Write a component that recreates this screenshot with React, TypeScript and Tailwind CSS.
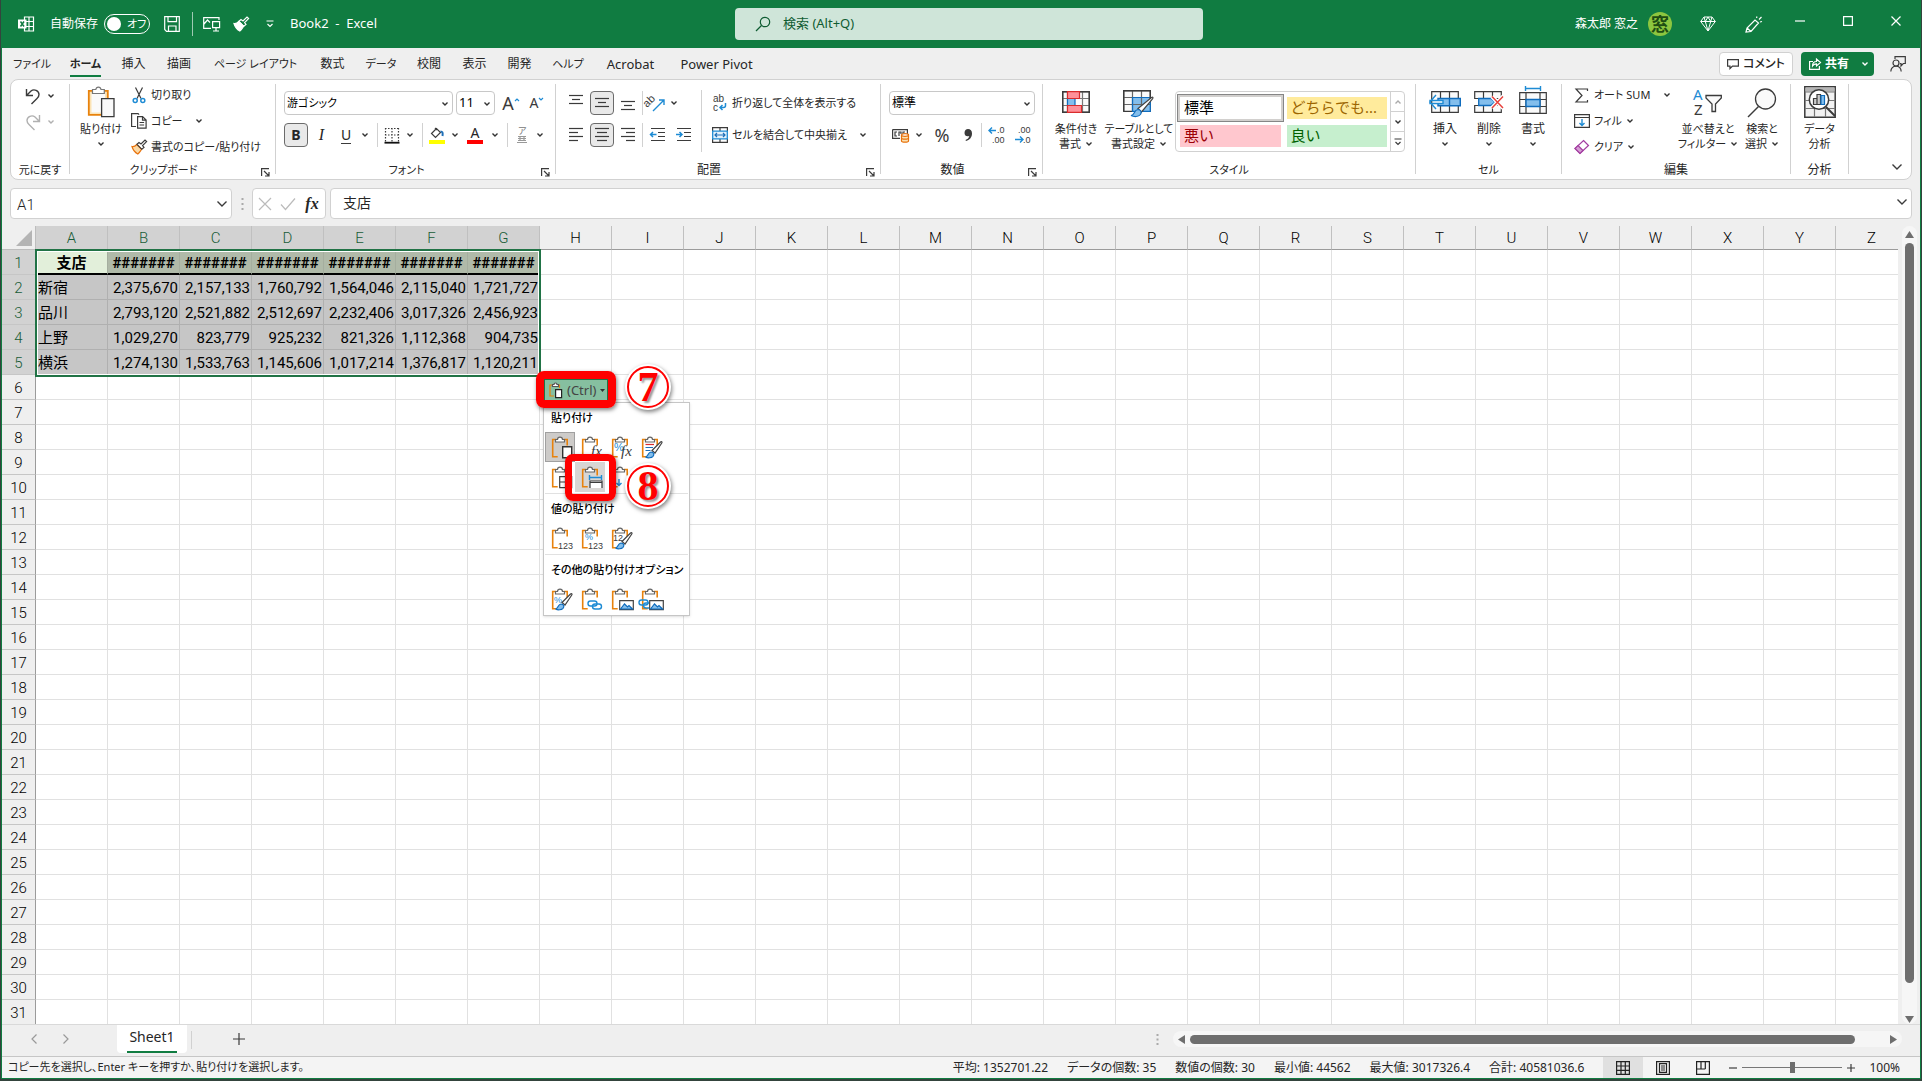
import type { ReactNode } from 'react';
import clsx from 'clsx';

const COLUMNS = 'ABCDEFGHIJKLMNOPQRSTUVWXYZ'.split('');
const ROW_COUNT = 31;
const SELECTED_COLS = 7;
const SELECTED_ROWS = 5;

const HASHES = '#######';

const DATA: string[][] = [
  ['支店', HASHES, HASHES, HASHES, HASHES, HASHES, HASHES],
  ['新宿', '2,375,670', '2,157,133', '1,760,792', '1,564,046', '2,115,040', '1,721,727'],
  ['品川', '2,793,120', '2,521,882', '2,512,697', '2,232,406', '3,017,326', '2,456,923'],
  ['上野', '1,029,270', '823,779', '925,232', '821,326', '1,112,368', '904,735'],
  ['横浜', '1,274,130', '1,533,763', '1,145,606', '1,017,214', '1,376,817', '1,120,211'],
];

const TABS = [
  { label: 'ファイル', width: 'w-14' },
  { label: 'ホーム', width: 'w-[51px]', active: true },
  { label: '挿入', width: 'w-[45px]' },
  { label: '描画', width: 'w-[46px]' },
  { label: 'ページ レイアウト', width: 'w-[107px]' },
  { label: '数式', width: 'w-[47px]' },
  { label: 'データ', width: 'w-[50px]' },
  { label: '校閲', width: 'w-[46px]' },
  { label: '表示', width: 'w-[45px]' },
  { label: '開発', width: 'w-[45px]' },
  { label: 'ヘルプ', width: 'w-[52px]' },
  { label: 'Acrobat', width: 'w-[73px]' },
  { label: 'Power Pivot', width: 'w-[99px]' },
];

const STATS = [
  '平均: 1352701.22',
  'データの個数: 35',
  '数値の個数: 30',
  '最小値: 44562',
  '最大値: 3017326.4',
  '合計: 40581036.6',
];

/* ---------- shared bits ---------- */

const labelSize = (text: string) => {
  if (/[\u3040-\u30ff]/.test(text)) return 'text-[11px]';
  return /^[\x20-\x7e]+$/.test(text) ? 'text-[13px]' : 'text-xs';
};

interface IconProps {
  w: number;
  h: number;
  children: ReactNode;
  className?: string;
  stroke?: string;
}

const Icon = ({ w, h, children, className, stroke = '#3b3b3b' }: IconProps) => (
  <svg
    width={w}
    height={h}
    viewBox={`0 0 ${w} ${h}`}
    fill="none"
    stroke={stroke}
    strokeWidth="1.2"
    className={clsx('shrink-0 overflow-visible', className)}
    aria-hidden="true"
  >
    {children}
  </svg>
);

const Chevron = ({ color = '#333', className }: { color?: string; className?: string }) => (
  <Icon w={8} h={6} stroke={color} className={className}>
    <path d="M1.5 1.5 4 4l2.5-2.5" strokeWidth="1.4" />
  </Icon>
);

const WideChevron = ({ className }: { className?: string }) => (
  <Icon w={12} h={8} className={className}>
    <path d="M1.5 1.5 6 6l4.5-4.5" strokeWidth="1.4" />
  </Icon>
);

const DropButton = ({ label, className = 'w-4', color }: { label: string; className?: string; color?: string }) => (
  <button type="button" aria-label={label} className={clsx('flex h-6 items-center justify-center', className)}>
    <Chevron color={color} />
  </button>
);

interface ToolProps {
  label: string;
  children: ReactNode;
  className?: string;
  active?: boolean;
}

const Tool = ({ label, children, className = 'w-6', active }: ToolProps) => (
  <button
    type="button"
    aria-label={label}
    aria-pressed={active}
    className={clsx(
      'flex h-6 shrink-0 items-center justify-center',
      active && 'rounded-sm border border-[#6b6b6b] bg-[#e9e9e9]',
      className,
    )}
  >
    {children}
  </button>
);

const Sep = ({ className = 'mx-1 h-6' }: { className?: string }) => (
  <div className={clsx('w-px shrink-0 bg-[#d1d1d1]', className)} />
);

interface GroupProps {
  label: string;
  width: string;
  children: ReactNode;
  launcher?: boolean;
}

const Group = ({ label, width, children, launcher }: GroupProps) => (
  <section aria-label={label} className={clsx('flex shrink-0', width)}>
    <div className="flex min-w-0 flex-1 flex-col">
      <div className="flex h-[78px] items-start">{children}</div>
      <div className={clsx('flex h-4 items-center', labelSize(label))}>
        <span className="flex-1 text-center leading-4">{label}</span>
        {launcher && (
          <button type="button" aria-label={`${label}の設定`} className="mr-0.5 w-4 pl-1 pt-1">
            <Icon w={9} h={9}>
              <path d="M.6 8V.6H8M3 3l5 5M8 4v4H4" />
            </Icon>
          </button>
        )}
      </div>
    </div>
    <Sep className="h-[90px]" />
  </section>
);

interface BigButtonProps {
  icon: ReactNode;
  lines: string[];
  width: string;
  drop?: boolean;
}

// Tall ribbon button; the arrow goes after the second line, or on its own when there is only one.
const BigButton = ({ icon, lines, width, drop = true }: BigButtonProps) => (
  <button type="button" className={clsx('flex shrink-0 flex-col items-center whitespace-nowrap leading-[15px]', width)}>
    <span className="mb-px flex h-9 items-center justify-center">{icon}</span>
    <span className={clsx('leading-[15px]', labelSize(lines[0]))}>{lines[0]}</span>
    <span className="flex h-[15px] items-center gap-1">
      {lines[1]}
      {drop && <Chevron />}
    </span>
  </button>
);

const SmallButton = ({ icon, children }: { icon: ReactNode; children: ReactNode }) => (
  <button type="button" className="flex h-[22px] items-center gap-1 whitespace-nowrap text-[11px]">
    <span className="flex w-4 justify-center">{icon}</span>
    <span>{children}</span>
  </button>
);

/* ---------- ribbon icons ---------- */

const PasteIcon = () => (
  <Icon w={28} h={32}>
    <path d="M1.8 4.8h19v24h-19z" fill="#fbe3b5" stroke="#e8820c" strokeWidth="1.8" />
    <path d="M4.5 7.5h13.5v19H4.5z" fill="#fafafa" stroke="none" />
    <path d="M5.5 7.5v-4h3.3C9.3.2 13.5.2 14 3.5h3.3v4z" fill="#fff" stroke="#777" />
    <path d="M14.6 12.6H27v18H14.6z" fill="#fafafa" strokeWidth="1.3" />
  </Icon>
);

const ScissorsIcon = () => (
  <Icon w={14} h={17}>
    <path d="M3.5.5 9 11.5M10.500.5 5 11.500" />
    <circle cx="3.2" cy="13.5" r="2" stroke="#1e8bd4" strokeWidth="1.5" />
    <circle cx="10.8" cy="13.5" r="2" stroke="#1e8bd4" strokeWidth="1.5" />
  </Icon>
);

const CopyIcon = () => (
  <Icon w={16} h={16}>
    <path d="M5 13.5H.6V.6h6.5l1 1" />
    <path d="M6.6 3.6h5l3.5 3.5v8H6.6zM11.5 3.6v3.600h3.600M8.500 9.500h4.600M8.500 12h4.600" />
  </Icon>
);

const BrushIcon = ({ light }: { light?: boolean }) => (
  <Icon w={17} h={16} stroke={light ? '#fff' : '#3b3b3b'}>
    <path
      d="M1 7.5c2 .3 3.500-.6 4.800-2l4.800 4.800c-1.200 1.500-2 3.200-3.800 4.700C4 13.500 2 11 1 7.500z"
      fill={light ? '#fff' : '#fbd9a5'}
      stroke={light ? '#fff' : '#e8720c'}
    />
    <path d="M6 5.300 8 3.500l2 1.500 4-4 1.600 1.600-4 4L13 8.500l-2.200 1.800z" />
  </Icon>
);

const FillBucketIcon = () => (
  <Icon w={16} h={17}>
    <path d="M7.500 1.500 2.500 6.500l4 4 5-5zM6 1l2 2" />
    <path d="M11.500 4.500c2 0 2.500 1 2 4.500" stroke="#1e6fb8" strokeWidth="2" />
    <path d="M0 13h16v4H0z" fill="#ff0" stroke="none" />
  </Icon>
);

const BordersIcon = () => (
  <Icon w={16} h={17}>
    <path d="M1 1.500h14M1 8h14M1.500 1v14M8 1v14M14.500 1v14" strokeDasharray="1.5 1.5" />
    <path d="M.5 15.700h15" stroke="#111" strokeWidth="1.8" />
  </Icon>
);

type LineSet = [number, number, number][];

const LinesIcon = ({ lines }: { lines: LineSet }) => (
  <Icon w={16} h={16}>
    {lines.map(([x1, x2, y]) => (
      <path key={y} d={`M${x1} ${y}.5H${x2}`} />
    ))}
  </Icon>
);

const IndentIcon = ({ inward }: { inward?: boolean }) => (
  <Icon w={16} h={16}>
    <path d="M1 1.500h14M8 5.500h7M8 9.500h7M1 13.500h14" />
    <path d={inward ? 'M0 7.500h6M3.500 5 6 7.500 3.500 10' : 'M.5 7.500h6M3 5 .5 7.500 3 10'} stroke="#1e8bd4" strokeWidth="1.5" />
  </Icon>
);

const OrientationIcon = () => (
  <Icon w={18} h={18}>
    <text x="-2" y="9" fontSize="11" fill="#3b3b3b" stroke="none" fontFamily="Liberation Sans" transform="rotate(-45 5 9)">
      ab
    </text>
    <path d="M6 17 17 6M12 6h5v5" stroke="#1e8bd4" strokeWidth="1.4" />
  </Icon>
);

const WrapIcon = () => (
  <Icon w={16} h={17}>
    <g fontSize="10" fill="#3b3b3b" stroke="none" fontFamily="Liberation Sans">
      <text x="1" y="7">ab</text>
      <text x="1" y="16">c</text>
    </g>
    <path d="M13.500 8v2.500c0 1.500-.5 2-2 2H8M10.500 10 8 12.500l2.500 2.500" stroke="#1e8bd4" strokeWidth="1.5" />
  </Icon>
);

const MergeIcon = () => (
  <Icon w={16} h={16}>
    <path d="M.6 4.500V.6h14.800v3.900M.6 11.500v3.900h14.800v-3.900M8 .6V4M8 12v3.400" />
    <path d="M.7 4.200h14.600v7.600H.7z" fill="#e3f1fb" stroke="#1e8bd4" strokeWidth="1.3" />
    <path d="M3 8h10M5 6 3 8l2 2M11 6l2 2-2 2" stroke="#1e6fb8" />
  </Icon>
);

const CurrencyIcon = () => (
  <Icon w={18} h={15}>
    <path d="M.6 1.600h14.800V6M.6 1.600v8.800H8" />
    <path d="M5 4H3v4h2M7 8V4h2v2M11 6V4h2" />
    <path d="M9.500 7v6c0 1.600 7 1.600 7 0V7z" fill="#fbe3b5" stroke="#e8720c" />
    <ellipse cx="13" cy="7" rx="3.5" ry="1.3" fill="#fff" stroke="#e8720c" />
    <path d="M9.500 10c0 1.600 7 1.600 7 0" stroke="#e8720c" />
  </Icon>
);

const DecimalIcon = ({ fewer }: { fewer?: boolean }) => (
  <Icon w={18} h={18}>
    <g fontSize="9" fill="#3b3b3b" stroke="none" fontFamily="Liberation Sans">
      <text x={fewer ? 4 : 9} y="7">{fewer ? '.00' : '.0'}</text>
      <text x={fewer ? 9 : 4} y="17">{fewer ? '.0' : '.00'}</text>
    </g>
    <path d={fewer ? 'M1 13.500h8M6 10.500l3 3-3 3' : 'M1 4.500h7M4 1.500l-3 3 3 3'} stroke="#1e8bd4" strokeWidth="1.4" />
  </Icon>
);

const ConditionalIcon = () => (
  <Icon w={28} h={22}>
    <path d="M.7.7h26.600v20.600H.7z" fill="#fafafa" />
    <path d="M5.500.7v20.600M20.500.7v20.600M.7 7.500h26.600M.7 14.500h26.600" stroke="#777" />
    <path d="M5.500 7.500h7.500v7H5.500z" fill="#83beec" stroke="#0f6cbd" />
    <path d="M.7.7h26.600v20.600H.7z" strokeWidth="1.4" />
    <path d="M5.500.7h12v6.800h-12zM5.500 14.500h14v6.800h-14z" fill="#ff9199" stroke="#d92c2c" />
  </Icon>
);

const TableFormatIcon = () => (
  <Icon w={32} h={28} className="mt-1">
    <path d="M.7.7h26.600v20.600H.7z" fill="#fafafa" />
    <path d="M9.500 7.500h17.800v13.800H9.500z" fill="#83beec" stroke="none" />
    <path d="M9.500.7v20.600M18.500.7v20.600M.7 7.500h26.600M.7 14.500h26.600" stroke="#666" />
    <path d="M9.500 7.500h17.800v13.800H9.500z" stroke="#0f6cbd" />
    <path d="M.7 21.300V.7h26.600V9" strokeWidth="1.4" />
    <path d="M15 18.500 28.500 7.500c1.300-.8 2 .2 1 1.300L18.500 22z" fill="#fff" stroke="#444" />
    <path d="M8 25.500c4 0 2.500-5.500 7-6 3 .2 4 3 2.500 5-2 2.500-6.500 2.500-9.500 1z" fill="#83beec" stroke="#0f6cbd" />
  </Icon>
);

const InsertCellsIcon = () => (
  <Icon w={32} h={22}>
    <path d="M2.700.7h26.600v20.600H2.700zM11.500.7v20.600M20.500.7v20.600" fill="#fafafa" />
    <path d="M9 7.500h22.300v7.200H9zM20.500 7.500v7.200" fill="#83beec" stroke="#0f6cbd" strokeWidth="1.4" />
    <path d="M7 4 .8 11 7 18M1 9.500h13v3H1z" fill="#fff" stroke="#1e8bd4" strokeWidth="1.4" />
  </Icon>
);

const DeleteCellsIcon = () => (
  <Icon w={30} h={22}>
    <path d="M.7.7h26.600v6.800H.7zM.7 14.500h26.600v6.800H.7zM9.500.7v6.800M18.500.7v6.800M9.500 14.500v6.800M18.500 14.500v6.800" fill="#fafafa" />
    <path d="M4.700 7.500H17l4 3.500-4 3.500H4.700z" fill="#83beec" stroke="#0f6cbd" strokeWidth="1.3" />
    <path d="M18 5.500 29 17M29 5.500 18 17" stroke="#fff" strokeWidth="4" />
    <path d="M18 5.500 29 17M29 5.500 18 17" stroke="#e8413c" strokeWidth="1.5" />
  </Icon>
);

const FormatCellsIcon = () => (
  <Icon w={28} h={28} className="mb-1">
    <path d="M6.500 2.500h15M6.500 0v5M21.500 0v5" stroke="#1e8bd4" strokeWidth="1.4" />
    <path d="M.7 6.700h26.600v20.600H.7zM7 6.700v20.600M21 6.700v20.600M.7 13.500h26.600M.7 20.500h26.600" fill="#fafafa" />
    <path d="M7 13.500h14v7H7z" fill="#83beec" stroke="#0f6cbd" strokeWidth="1.4" />
  </Icon>
);

const SigmaIcon = () => (
  <Icon w={14} h={15}>
    <path d="M12.500 3V1H1l6 6.500L1 14h11.500v-2" />
  </Icon>
);

const FillDownIcon = () => (
  <Icon w={16} h={14}>
    <path d="M.6.6h14.800v12.800H.6zM.6 3.500h14.800" />
    <path d="M8 5v6.500M5.500 9 8 11.500 10.500 9" stroke="#1e8bd4" strokeWidth="1.4" />
  </Icon>
);

const EraserIcon = () => (
  <Icon w={16} h={16} stroke="#a33ea1">
    <path d="m9.500 1.500 5 5-8.500 8-5-5z" fill="#fff" />
    <path d="m4 6.500 5 5-3 3-5-5z" fill="#d59dd4" />
  </Icon>
);

const SortFilterIcon = () => (
  <Icon w={30} h={28}>
    <g fontSize="15" stroke="none" fontFamily="Noto Sans">
      <text x="0" y="12" fill="#1e8bd4">A</text>
      <text x="1" y="27" fill="#3b3b3b">Z</text>
    </g>
    <path d="M13 7.500h15.300v2.500L22.500 16v7.500H19V16l-6-6z" fill="#fafafa" strokeWidth="1.3" />
  </Icon>
);

const FindIcon = () => (
  <Icon w={30} h={30} className="mt-0.5">
    <circle cx="18.5" cy="11" r="10" fill="#fafafa" strokeWidth="1.3" />
    <path d="M11.500 18.500 1 29" strokeWidth="1.5" />
  </Icon>
);

const AnalyzeIcon = () => (
  <Icon w={32} h={32}>
    <path d="M.8.8h30.400v30.400H.8z" fill="#f2f2f2" strokeWidth="1.5" />
    <path d="M1.500 1.500h29v4h-29z" fill="#b5b5b5" stroke="none" />
    <path d="M.8 6h30.400M.8 14.500h30.400M.8 22.500h30.400M10.500 22v9M21.500 22v9" stroke="#777" />
    <circle cx="15" cy="13.5" r="9.7" fill="#fff" strokeWidth="1.5" />
    <path d="M22 21l9 9" strokeWidth="2" />
    <path d="M9.500 12.500h3.500v6H9.500zM13 8.500h3.500v10H13z" fill="#ccc" />
    <path d="M17 9.500h3.500v9H17z" fill="#83beec" stroke="#0f6cbd" />
  </Icon>
);

/* ---------- paste menu icons ---------- */

const Clip = ({ children }: { children?: ReactNode }) => (
  <Icon w={26} h={26}>
    <path d="M8.500 5.500H4.700v17.300h5M15.500 5.500h3.700v6" stroke="#e8820c" strokeWidth="1.6" />
    <path d="M7.500 8V5.500h2c0-3.300 5-3.300 5 0h2V8z" fill="#fff" stroke="#666" />
    {children}
  </Icon>
);

const clipText = (value: string, x: number, y: number, color = '#3b3b3b', size = 9) => (
  <text x={x} y={y} fontSize={size} fill={color} stroke="none" fontFamily="Liberation Sans">
    {value}
  </text>
);

const fxText = (
  <text x="13" y="22" fontSize="15" fontStyle="italic" fill="#3b3b3b" stroke="none" fontFamily="Liberation Serif">
    fx
  </text>
);

const SmallBrush = () => (
  <g>
    <path d="M14 16.500 22.500 8c1-.8 2 0 1.300 1L17 19z" fill="#fff" stroke="#444" />
    <path d="M7.500 23c2.500 0 2-4.500 5.500-5 3 .3 3.500 2.500 2 4.300-1.500 1.700-5 2-7.500.7z" fill="#83beec" stroke="#0f6cbd" />
  </g>
);

const Link = ({ x = 0, y = 0 }: { x?: number; y?: number }) => (
  <g transform={`translate(${x} ${y})`} stroke="#1e8bd4" strokeWidth="1.4">
    <rect x="10" y="15" width="9" height="5" rx="2.5" />
    <rect x="14.5" y="18" width="9" height="5" rx="2.5" />
  </g>
);

const Picture = () => (
  <g>
    <path d="M11.700 14.700h13.600v9H11.700z" fill="#fff" stroke="#444" />
    <path d="m12.500 23 4-5 3 3 1.500-1.500 3.500 3.500z" fill="#83beec" stroke="#0f6cbd" />
  </g>
);

const MENU_SECTIONS = [
  {
    title: '貼り付け',
    items: [
      {
        label: '貼り付け',
        icon: <Clip><path d="M14.700 12.700h9v11h-9z" fill="#fff" stroke="#333" strokeWidth="1.4" /></Clip>,
        state: 'current',
      },
      { label: '数式', icon: <Clip>{fxText}</Clip> },
      { label: '数式と数値の書式', icon: <Clip>{clipText('%', 6, 17, '#1e8bd4', 11)}{fxText}</Clip> },
      {
        label: '元の書式を保持',
        icon: (
          <Clip>
            <path d="M7.500 10.500H16" stroke="#d92c2c" />
            <path d="M7.500 13.500H15M7.500 16.500h5" stroke="#1e6fb8" />
            <SmallBrush />
          </Clip>
        ),
      },
      { label: '罫線なし', icon: <Clip><path d="M11.700 12.700h12v11h-12zM11.700 18h12M17.500 12.700v11" fill="#fff" /></Clip> },
      {
        label: '元の列幅を保持',
        icon: (
          <Clip>
            <path d="M11.500 13.500h12M11.500 11v5M23.500 11v5" stroke="#1e8bd4" strokeWidth="1.4" />
            <path d="M12 24v-7h12v7M12 18.500h12" fill="#fff" />
          </Clip>
        ),
        state: 'hover',
      },
      { label: '行/列の入れ替え', icon: <Clip><path d="M11 15v6M8.500 19l2.500 2.500 2.500-2.500" stroke="#1e8bd4" strokeWidth="1.4" /></Clip> },
    ],
  },
  {
    title: '値の貼り付け',
    items: [
      { label: '値', icon: <Clip>{clipText('123', 10, 24)}</Clip> },
      { label: '値と数値の書式', icon: <Clip>{clipText('%', 7, 15, '#1e8bd4')}{clipText('123', 10, 24)}</Clip> },
      { label: '値と元の書式', icon: <Clip>{clipText('12', 5, 16)}<SmallBrush /></Clip> },
    ],
  },
  {
    title: 'その他の貼り付けオプション',
    items: [
      { label: '書式設定', icon: <Clip>{clipText('%', 6, 17, '#1e8bd4')}<SmallBrush /></Clip> },
      { label: 'リンク貼り付け', icon: <Clip><Link /></Clip> },
      { label: '図', icon: <Clip><Picture /></Clip> },
      { label: 'リンクされた図', icon: <Clip><Link x={-9} y={-1} /><Picture /></Clip> },
    ],
  },
];

/* ---------- page sections ---------- */

const TitleBar = () => (
  <header className="flex h-12 shrink-0 items-center bg-[#107c41] text-white">
    <div className="flex flex-1 items-center pl-4">
      <Icon w={16} h={16} stroke="#fff">
        <path d="M6.500 4V1h9v14h-9v-3M11 1v14M6.500 5.500h9M6.500 10.500h9" />
        <path d="M0 3.500h8.500v9H0z" fill="#fff" stroke="none" />
        <path d="m2.500 5.500 3.500 5M6 5.500l-3.500 5" stroke="#107c41" strokeWidth="1.5" />
      </Icon>
      <label htmlFor="autosave" className="ml-4">自動保存</label>
      <button
        id="autosave"
        type="button"
        role="switch"
        aria-checked="false"
        className="ml-1.5 flex h-5 w-[46px] items-center gap-1.5 rounded-full border border-white pl-0.5 text-[11px]"
      >
        <span className="size-3.5 rounded-full bg-white" />
        オフ
      </button>
      <button type="button" aria-label="上書き保存" className="ml-3.5">
        <Icon w={16} h={16} stroke="#fff">
          <path d="M.7.7h14.600v14.600H2.500L.7 13.500zM4 .7v5h8.500v-5M4.500 15v-5H12v5" />
        </Icon>
      </button>
      <div className="ml-3 mr-2.5 h-6 w-px bg-white/60" />
      <button type="button" aria-label="画像">
        <Icon w={18} h={16} stroke="#fff">
          <path d="M16 4V1.600H.7v10.800H8M1 8l3.500-4L7 6.500" />
          <path d="M9.600 5.600h7v6h-7zM13 11.600v3M10 15h6" />
        </Icon>
      </button>
      <button type="button" aria-label="書式のコピー" className="ml-3">
        <BrushIcon light />
      </button>
      <button type="button" aria-label="クイック アクセスのカスタマイズ" className="ml-4">
        <Icon w={8} h={8} stroke="#fff">
          <path d="M.5 1h7M1.500 4 4 6.500 6.500 4" />
        </Icon>
      </button>
      <h1 className="ml-4 whitespace-pre text-[13px]">Book2  -  Excel</h1>
    </div>
    <label className="flex h-8 w-[468px] shrink-0 items-center rounded-sm bg-[#cfe5d9] pl-5 text-[#0f5c32]">
      <Icon w={16} h={16} stroke="#0f5c32">
        <circle cx="10" cy="6" r="4.7" />
        <path d="M6.500 9.500 1 15" />
      </Icon>
      <input
        type="search"
        aria-label="検索"
        placeholder="検索 (Alt+Q)"
        className="ml-3 flex-1 bg-transparent text-[13px] placeholder:text-[#0f5c32] placeholder:opacity-100"
      />
    </label>
    <div className="flex flex-1 items-center justify-end">
      <span>森太郎 窓之</span>
      <span className="ml-2.5 flex size-6 items-center justify-center rounded-full bg-[#8cc63f] text-lg font-bold leading-6 text-[#1d4d12]">
        窓
      </span>
      <div className="ml-2 flex">
        <button type="button" aria-label="Premium" className="flex w-12 justify-center pl-2">
          <Icon w={16} h={16} stroke="#fff">
            <path d="M4 1h8l3.300 4.500L8 15 .7 5.500zM.7 5.500h14.600M4 1l1.300 4.500L8 15l2.700-9.500L12 1M5.300 5.500 8 1l2.700 4.500" strokeWidth="1" />
          </Icon>
        </button>
        <button type="button" aria-label="描画" className="flex w-12 justify-center pl-1">
          <Icon w={18} h={17} stroke="#fff">
            <path d="M1 16 2 12 10 4l3.500 3L6 15.500zM2 12l4 3.500M11.500 2l.5-1.500M14 3.500l2.500-2.500M15 6l2-.5" />
          </Icon>
        </button>
        <button type="button" aria-label="最小化" className="flex w-12 justify-center">
          <Icon w={10} h={10} stroke="#fff"><path d="M0 5h10" /></Icon>
        </button>
        <button type="button" aria-label="最大化" className="flex w-12 justify-center">
          <Icon w={10} h={10} stroke="#fff"><path d="M.6.6h8.800v8.800H.6z" /></Icon>
        </button>
        <button type="button" aria-label="閉じる" className="flex w-12 justify-center">
          <Icon w={10} h={10} stroke="#fff"><path d="m.5.5 9 9M9.500.5l-9 9" /></Icon>
        </button>
      </div>
    </div>
  </header>
);

const TabRow = () => (
  <div className="flex h-[31px] shrink-0 items-center justify-between pl-0.5 pr-3.5">
    <nav className="flex pt-[3px]" aria-label="リボン タブ">
      {TABS.map((tab) => (
        <button key={tab.label} type="button" className={clsx('flex justify-center whitespace-nowrap', tab.width)}>
          <span
            className={clsx(
              'border-b-2 leading-[22px]',
              labelSize(tab.label),
              tab.active ? 'border-[#107c41] font-bold' : 'border-transparent',
            )}
          >
            {tab.label}
          </span>
        </button>
      ))}
    </nav>
    <div className="flex items-center gap-2">
      <button type="button" className="flex h-6 w-[74px] items-center justify-center gap-1 rounded-sm border border-[#d1d1d1] bg-white font-medium">
        <Icon w={12} h={12}>
          <path d="M.6 1.600h10.800v6.500H5.500L3 10.500V8.100H.6z" />
        </Icon>
        コメント
      </button>
      <button type="button" className="flex h-6 w-[73px] items-center gap-1 rounded-sm bg-[#107c41] pl-2 font-bold text-white">
        <Icon w={12} h={12} stroke="#fff">
          <path d="M4 3.500H.6v7.900h9.800V8M3.500 8c0-3 1.500-4.500 4-4.500V1l4 3.500-4 3.500V5.800C5.500 5.800 4.500 6.500 3.500 8z" />
        </Icon>
        共有
        <Chevron color="#fff" className="ml-2" />
      </button>
      <button type="button" aria-label="共同編集者" className="ml-2">
        <Icon w={16} h={16}>
          <circle cx="6" cy="7" r="3" />
          <path d="M.8 15.500c.5-7 10-7 10.400 0M5 3V.7h10.300v6.800h-2L11 10V7.500h-1" />
        </Icon>
      </button>
    </div>
  </div>
);

const ClipboardGroup = () => (
  <Group label="クリップボード" width="w-[206px]" launcher>
    <div className="ml-1 flex">
      <BigButton icon={<PasteIcon />} lines={['貼り付け']} width="w-[54px]" />
      <div className="ml-[3px] flex flex-col gap-1">
        <SmallButton icon={<ScissorsIcon />}>切り取り</SmallButton>
        <div className="flex h-[22px] items-center gap-2">
          <SmallButton icon={<CopyIcon />}>コピー</SmallButton>
          <DropButton label="コピーのオプション" />
        </div>
        <SmallButton icon={<BrushIcon />}>書式のコピー/貼り付け</SmallButton>
      </div>
    </div>
  </Group>
);

const Combo = ({ label, value, width }: { label: string; value: string; width: string }) => (
  <div className={clsx('relative', width)}>
    <select
      aria-label={label}
      className={clsx(
        'h-6 w-full appearance-none rounded-sm border border-[#c8c8c8] bg-white pl-0.5 text-black',
        labelSize(value),
      )}
    >
      <option>{value}</option>
    </select>
    <Chevron className="pointer-events-none absolute right-1 top-2.5" />
  </div>
);

const FontGroup = () => (
  <Group label="フォント" width="w-[280px]" launcher>
    <div className="flex flex-col gap-2 pl-2 pt-[7px]">
      <div className="flex">
        <Combo label="フォント名" value="游ゴシック" width="w-[169px] mr-[3px]" />
        <Combo label="サイズ" value="11" width="w-[39px] mr-[3px]" />
        <Tool label="拡大" className="w-[26px]">
          <span className="text-lg leading-5 text-[#3b3b3b]">A</span>
          <Icon w={6} h={5} stroke="#1e8bd4" className="mb-2"><path d="m1 4 2-2 2 2" /></Icon>
        </Tool>
        <Tool label="縮小" className="w-[26px]">
          <span className="text-sm leading-5 text-[#3b3b3b]">A</span>
          <Icon w={6} h={5} stroke="#1e8bd4" className="mb-2"><path d="m1 1 2 2 2-2" /></Icon>
        </Tool>
      </div>
      <div className="flex">
        <Tool label="太字" active><span className="text-sm font-bold">B</span></Tool>
        <Tool label="斜体" className="w-[27px]">
          <span className="font-['Liberation_Serif',serif] text-base italic">I</span>
        </Tool>
        <Tool label="下線" className="w-[22px]"><span className="border-b border-[#3b3b3b] text-sm leading-4">U</span></Tool>
        <DropButton label="下線の種類" />
        <Sep />
        <Tool label="罫線" className="w-5"><BordersIcon /></Tool>
        <DropButton label="罫線の種類" />
        <Sep />
        <Tool label="塗りつぶし" className="w-5"><FillBucketIcon /></Tool>
        <DropButton label="塗りつぶしの色" />
        <Tool label="フォントの色"><span className="w-4 border-b-4 border-[#f00] text-center text-sm leading-[14px]">A</span></Tool>
        <DropButton label="フォントの色の選択" />
        <Sep />
        <Tool label="ふりがな" className="w-5">
          <Icon w={12} h={18} stroke="#999">
            <text x="2" y="8" fontSize="9" fill="#777" stroke="none" fontFamily="Noto Sans CJK JP">ア</text>
            <path d="M2 10.500h8M4 10.500v4M8 10.500v4M2 12.500h8M1 16.500h10M2 14.500h8" />
          </Icon>
        </Tool>
        <DropButton label="ふりがなの設定" />
      </div>
    </div>
  </Group>
);

const AlignGroup = () => (
  <Group label="配置" width="w-[325px]" launcher>
    <div className="flex w-[145px] shrink-0 flex-col gap-2 pl-2 pt-[7px]">
      <div className="flex gap-0.5">
        <Tool label="上揃え"><LinesIcon lines={[[1, 15, 0], [4, 12, 4], [1, 15, 8]]} /></Tool>
        <Tool label="上下中央揃え" active><LinesIcon lines={[[1, 15, 3], [4, 12, 7], [1, 15, 11]]} /></Tool>
        <Tool label="下揃え"><LinesIcon lines={[[1, 15, 6], [4, 12, 10], [1, 15, 14]]} /></Tool>
        <Sep className="mr-px h-6" />
        <Tool label="方向" className="w-5"><OrientationIcon /></Tool>
        <DropButton label="方向の選択" className="w-3" />
      </div>
      <div className="flex gap-0.5">
        <Tool label="左揃え"><LinesIcon lines={[[1, 15, 1], [1, 10, 5], [1, 15, 9], [1, 10, 13]]} /></Tool>
        <Tool label="中央揃え" active><LinesIcon lines={[[1, 15, 1], [3, 13, 5], [1, 15, 9], [3, 13, 13]]} /></Tool>
        <Tool label="右揃え"><LinesIcon lines={[[1, 15, 1], [6, 15, 5], [1, 15, 9], [6, 15, 13]]} /></Tool>
        <Sep className="mr-px h-6" />
        <Tool label="インデントを減らす"><IndentIcon /></Tool>
        <Tool label="インデントを増やす"><IndentIcon inward /></Tool>
      </div>
    </div>
    <Sep className="mt-1.5 h-[62px]" />
    <div className="flex flex-col gap-2.5 pl-2.5 pt-2">
      <SmallButton icon={<WrapIcon />}>折り返して全体を表示する</SmallButton>
      <div className="flex h-[22px] items-center gap-2">
        <SmallButton icon={<MergeIcon />}>セルを結合して中央揃え</SmallButton>
        <DropButton label="結合のオプション" />
      </div>
    </div>
  </Group>
);

const NumberGroup = () => (
  <Group label="数値" width="w-[162px]" launcher>
    <div className="flex flex-col gap-2 pl-2 pt-[7px]">
      <Combo label="表示形式" value="標準" width="w-[146px]" />
      <div className="flex">
        <Tool label="通貨表示形式"><CurrencyIcon /></Tool>
        <DropButton label="通貨の選択" className="w-3" />
        <Tool label="パーセント スタイル" className="w-[34px]"><span className="text-lg text-[#3b3b3b]">%</span></Tool>
        <Tool label="桁区切りスタイル" className="w-[18px]">
          <Icon w={8} h={12} stroke="none">
            <path d="M4 0c2.500 0 4 1.500 4 4.500 0 4-2.500 6.500-6 7.500l-.5-1C3.500 10 5 9 5.300 7 2.500 8 .5 6.500.5 4 .5 1.500 2 0 4 0z" fill="#3b3b3b" />
          </Icon>
        </Tool>
        <Sep />
        <Tool label="小数点以下の表示桁数を増やす" className="w-[22px] mr-1"><DecimalIcon /></Tool>
        <Tool label="小数点以下の表示桁数を減らす" className="w-[22px]"><DecimalIcon fewer /></Tool>
      </div>
    </div>
  </Group>
);

const STYLE_CELLS = [
  { label: '標準', color: 'bg-white text-black', selected: true },
  { label: 'どちらでも...', color: 'bg-[#ffeb9c] text-[#9c6500]' },
  { label: '悪い', color: 'bg-[#ffc7ce] text-[#9c0006]' },
  { label: '良い', color: 'bg-[#c6efce] text-[#006100]' },
];

const StylesGroup = () => (
  <Group label="スタイル" width="w-[373px]">
    <div className="flex w-full pl-1.5">
      <BigButton icon={<ConditionalIcon />} lines={['条件付き', '書式']} width="w-[54px]" />
      <BigButton icon={<TableFormatIcon />} lines={['テーブルとして', '書式設定']} width="w-[70px] ml-px" />
      <div className="ml-px mt-[7px] flex h-[61px] w-[230px] rounded-sm border border-[#d1d1d1] pl-px">
        <div className="grid w-[213px] grid-cols-2 content-start pt-0.5">
          {STYLE_CELLS.map((cell) => (
            <button
              key={cell.label}
              type="button"
              className={clsx('h-7 text-left', cell.selected ? 'border border-[#868686] bg-[#d2d0ce] p-0.5' : 'p-[3px]')}
            >
              <span className={clsx('block h-[22px] truncate pl-1 text-[15px] leading-5 [font-feature-settings:normal]', cell.color)}>
                {cell.label}
              </span>
            </button>
          ))}
        </div>
        <div className="flex flex-1 flex-col divide-y divide-[#d1d1d1] border-l border-[#d1d1d1]">
          <button type="button" aria-label="前へ" className="flex flex-1 items-center justify-center">
            <Chevron color="#aaa" className="rotate-180" />
          </button>
          <button type="button" aria-label="次へ" className="flex flex-1 items-center justify-center">
            <Chevron />
          </button>
          <button type="button" aria-label="その他" className="flex flex-1 items-center justify-center">
            <Icon w={8} h={8}><path d="M.5 1h7M1.500 4 4 6.500 6.500 4" /></Icon>
          </button>
        </div>
      </div>
    </div>
  </Group>
);

const EditGroup = () => (
  <Group label="編集" width="w-[229px]">
    <div className="flex w-[118px] shrink-0 flex-col gap-1 pl-3">
      <div className="flex h-[22px] items-center justify-between pr-[5px]">
        <SmallButton icon={<SigmaIcon />}>オート SUM</SmallButton>
        <DropButton label="集計方法" />
      </div>
      <div className="flex h-[22px] items-center gap-1">
        <SmallButton icon={<FillDownIcon />}>フィル</SmallButton>
        <Chevron />
      </div>
      <div className="flex h-[22px] items-center gap-1">
        <SmallButton icon={<EraserIcon />}>クリア</SmallButton>
        <Chevron />
      </div>
    </div>
    <BigButton icon={<SortFilterIcon />} lines={['並べ替えと', 'フィルター']} width="w-14" />
    <BigButton icon={<FindIcon />} lines={['検索と', '選択']} width="w-12 ml-0.5" />
  </Group>
);

const Ribbon = () => (
  <div className="mx-2 flex h-[101px] shrink-0 rounded-lg border border-[#d1d1d1] bg-white pt-1 text-[11px]">
    <Group label="元に戻す" width="w-[59px]">
      <div className="flex flex-col gap-0.5 pl-3">
        <div className="flex items-center">
          <Tool label="元に戻す" className="w-5">
            <Icon w={16} h={17}>
              <path d="M1.500 1v6.500H8M1.500 7.500 6 3c3-2.500 8-.5 8 3.500 0 2-.8 3-2 4L6.500 16" strokeWidth="1.4" />
            </Icon>
          </Tool>
          <DropButton label="元に戻す履歴" />
        </div>
        <div className="flex items-center">
          <Tool label="やり直し" className="w-5">
            <Icon w={16} h={17} stroke="#b0b0b0">
              <path d="M14.500 1v6.500H8M14.500 7.500 10 3C7 .5 2 2.500 2 6.500c0 2 .8 3 2 4L9.500 16" strokeWidth="1.4" />
            </Icon>
          </Tool>
          <DropButton label="やり直し履歴" color="#b0b0b0" />
        </div>
      </div>
    </Group>
    <ClipboardGroup />
    <FontGroup />
    <AlignGroup />
    <NumberGroup />
    <StylesGroup />
    <Group label="セル" width="w-[146px]">
      <div className="flex pl-[7px]">
        <BigButton icon={<InsertCellsIcon />} lines={['挿入']} width="w-11" />
        <BigButton icon={<DeleteCellsIcon />} lines={['削除']} width="w-11" />
        <BigButton icon={<FormatCellsIcon />} lines={['書式']} width="w-11" />
      </div>
    </Group>
    <EditGroup />
    <Group label="分析" width="w-[58px]">
      <BigButton icon={<AnalyzeIcon />} lines={['データ', '分析']} width="w-full" drop={false} />
    </Group>
    <div className="flex flex-1 items-end justify-end pb-2 pr-2">
      <button type="button" aria-label="リボンを折りたたむ"><WideChevron /></button>
    </div>
  </div>
);

const FormulaBar = () => (
  <div className="flex h-[46px] shrink-0 px-2 pb-[7px] pt-2">
    <div className="relative w-[222px]">
      <input
        aria-label="名前ボックス"
        defaultValue="A1"
        className="h-full w-full rounded-sm border border-[#d1d1d1] bg-white pl-1.5 pt-0.5 font-['Roboto',sans-serif] text-[15px] font-light"
      />
      <WideChevron className="pointer-events-none absolute right-1 top-3" />
    </div>
    <Icon w={20} h={31}>
      <path d="M10.500 10v12" strokeWidth="2" stroke="#aaa" strokeDasharray="2 3" />
    </Icon>
    <div className="flex w-[74px] items-center justify-between rounded-sm border border-[#d1d1d1] bg-white px-1">
      <button type="button" aria-label="キャンセル">
        <Icon w={16} h={16} stroke="#bbb"><path d="m2 2 12 12M14 2 2 14" /></Icon>
      </button>
      <button type="button" aria-label="入力">
        <Icon w={16} h={14} stroke="#bbb"><path d="m1 7.500 4.500 5L15 1.500" /></Icon>
      </button>
      <button type="button" aria-label="関数の挿入" className="w-[18px] font-['Liberation_Serif',serif] text-base font-bold italic leading-6">
        fx
      </button>
    </div>
    <div className="relative ml-1 flex-1">
      <input
        aria-label="数式バー"
        defaultValue="支店"
        className="h-full w-full rounded-sm border border-[#d1d1d1] bg-white pb-1 pl-3 font-['Noto_Sans_CJK_JP',sans-serif] text-sm"
      />
      <WideChevron className="pointer-events-none absolute right-1 top-2.5" />
    </div>
  </div>
);

const cellClass = (r: number, c: number) => {
  if (r >= SELECTED_ROWS || c >= SELECTED_COLS) return 'border-b border-[#e1e1e1]';
  if (r === 0) {
    return clsx(
      'border-b-2 border-b-black border-r-[#a5ae9f] text-center font-bold',
      c === 0 ? 'bg-[#e2efda]' : 'bg-[#b0baa9]',
    );
  }
  return clsx('border-b border-[#b0b0b0] bg-[#c6c6c6]', c === 0 ? 'pl-0.5 text-left' : 'pr-px text-right');
};

const Grid = () => (
  <table className="w-[1906px] table-fixed border-separate border-spacing-0 bg-white font-['Roboto','Noto_Sans_CJK_JP',sans-serif] text-[15px] leading-5 text-black">
    <thead>
      <tr>
        <th className="h-6 w-[34px] border-b border-r border-[#bdbdbd] bg-[#efefef] p-0" aria-label="すべて選択">
          <Icon w={16} h={16} className="ml-3.5" stroke="none">
            <path d="M16 0v16H0z" fill="#b4b4b4" />
          </Icon>
        </th>
        {COLUMNS.map((name, c) => (
          <th
            key={name}
            scope="col"
            className={clsx(
              'w-[72px] border-b border-r border-b-[#9b9b9b] border-r-[#c0c0c0] p-0 font-light',
              c < SELECTED_COLS ? 'bg-[#d2d2d2] text-[#185c37]' : 'bg-[#efefef]',
            )}
          >
            {name}
          </th>
        ))}
      </tr>
    </thead>
    <tbody>
      {Array.from({ length: ROW_COUNT }, (_, r) => (
        <tr key={r}>
          <th
            scope="row"
            className={clsx(
              'h-[25px] border-b border-r border-b-[#c6c6c6] border-r-[#9b9b9b] p-0 pt-0.5 font-light',
              r < SELECTED_ROWS ? 'bg-[#d2d2d2] text-[#185c37]' : 'bg-[#efefef]',
            )}
          >
            {r + 1}
          </th>
          {COLUMNS.map((name, c) => (
            <td key={name} className={clsx('overflow-hidden whitespace-nowrap border-r p-0 pt-0.5', cellClass(r, c))}>
              {DATA[r]?.[c]}
            </td>
          ))}
        </tr>
      ))}
    </tbody>
  </table>
);

const Badge = ({ children, className }: { children: ReactNode; className: string }) => (
  <div
    className={clsx(
      'absolute flex size-[46px] items-center justify-center rounded-full bg-white shadow-[1px_2px_4px_rgba(0,0,0,0.5)]',
      className,
    )}
  >
    <div className="flex size-[42px] items-center justify-center rounded-full border-2 border-[#f00]">
      <span className="font-['Liberation_Serif',serif] text-[42px] font-bold leading-[38px] text-[#f00] [text-shadow:2px_2px_2px_rgba(0,0,0,0.4)]">
        {children}
      </span>
    </div>
  </div>
);

const PasteMenu = () => (
  <div className="absolute left-[541px] top-[153px]">
    <button type="button" className="ml-px flex h-[23px] w-16 items-center gap-1 border border-[#217346] bg-[#86bfa0] pl-1 text-[13px] text-[#444]">
      <Icon w={14} h={17}>
        <path d="M4 3H1v11h4M8 3h2.500v3" stroke="#e8820c" />
        <path d="M3.500 4.500V2.500h1.500c0-2 3-2 3 0h1.500v2z" fill="#fff" stroke="#555" />
        <path d="M6.600 7.600h6v8h-6z" fill="#fff" stroke="#222" />
      </Icon>
      (Ctrl)
      <svg width="5" height="3" viewBox="0 0 5 3" className="shrink-0" aria-hidden="true"><path d="M0 0h5L2.500 3z" fill="#333" /></svg>
    </button>
    <div className="w-[147px] border border-[#c6c6c6] bg-white px-px shadow-sm">
      {MENU_SECTIONS.map((section, i) => (
        <div key={section.title} className={clsx(i > 0 && 'border-t border-[#e1e1e1]')}>
          <h2 className="whitespace-nowrap pl-1.5 text-[11px] font-medium leading-[29px] text-black">{section.title}</h2>
          <div className="flex flex-wrap pb-px">
            {section.items.map((item) => (
              <button
                key={item.label}
                type="button"
                aria-label={item.label}
                className={clsx(
                  'flex size-[30px] items-center justify-center pl-0.5',
                  'state' in item && item.state === 'current' && 'border border-[#a0a0a0] bg-[#cdcbc9]',
                  'state' in item && item.state === 'hover' && 'bg-[#d8d6d4]',
                )}
              >
                {item.icon}
              </button>
            ))}
          </div>
        </div>
      ))}
    </div>
  </div>
);

const Callouts = () => (
  <>
    <div className="absolute left-[534px] top-[145px] h-[37px] w-20 rounded-lg border-8 border-[#f00] shadow-[1px_2px_4px_rgba(0,0,0,0.5)]" />
    <div className="absolute left-[563px] top-[228px] h-[47px] w-[51px] rounded-lg border-[7px] border-[#f00] shadow-[1px_2px_4px_rgba(0,0,0,0.5)]" />
    <Badge className="left-[623px] top-[138px]">7</Badge>
    <Badge className="left-[623px] top-[237px]">8</Badge>
  </>
);

const Arrow = ({ d }: { d: string }) => (
  <Icon w={9} h={9} stroke="none">
    <path d={d} fill="#6e6e6e" />
  </Icon>
);

const Sheet = () => (
  <div className="flex min-h-0 flex-1">
    <main className="relative min-w-0 flex-1 overflow-hidden">
      <Grid />
      <div className="pointer-events-none absolute left-[33px] top-[23px] h-[128px] w-[506px] border-2 border-[#217346]">
        <div className="h-full border border-white" />
      </div>
      <PasteMenu />
      <Callouts />
    </main>
    <div className="ml-1 mr-[3px] flex w-[15px] flex-col items-center rounded-full bg-[#f6f6f6] pt-1">
      <button type="button" aria-label="上へスクロール"><Arrow d="M4.500 1 9 8H0z" /></button>
      <div className="mb-8 mt-1 w-[9px] flex-1 rounded-full bg-[#6e6e6e]" />
      <button type="button" aria-label="下へスクロール"><Arrow d="M0 1h9L4.500 8z" /></button>
    </div>
  </div>
);

const SheetTabs = () => (
  <div className="flex h-8 shrink-0 border-t border-[#d9d9d9]">
    <div className="flex items-center gap-6 pb-[3px] pl-7">
      <button type="button" aria-label="前のシート">
        <Icon w={8} h={12} stroke="#999"><path d="M6.500 1.500 2 6l4.500 4.500" /></Icon>
      </button>
      <button type="button" aria-label="次のシート">
        <Icon w={8} h={12} stroke="#999"><path d="M1.500 1.500 6 6l-4.500 4.500" /></Icon>
      </button>
    </div>
    <button type="button" className="ml-[47px] flex h-7 w-[70px] justify-center rounded-b-sm bg-white">
      <span className="border-b-2 border-[#107c41] px-0.5 text-sm leading-[23px]">Sheet1</span>
    </button>
    <Sep className="ml-1 mt-1.5 h-[18px]" />
    <button type="button" aria-label="新しいシート" className="ml-[41px] self-center pb-[3px]">
      <Icon w={12} h={12}><path d="M6 0v12M0 6h12" /></Icon>
    </button>
    <div className="flex flex-1 items-center justify-end pb-[3px]">
      <Icon w={3} h={12}>
        <path d="M1.500 1v11" strokeWidth="2" stroke="#aaa" strokeDasharray="2 2.5" />
      </Icon>
    </div>
    <div className="ml-[14px] mr-[18px] mt-1.5 flex h-4 w-[38%] items-center rounded-full bg-[#f6f6f6] px-1">
      <button type="button" aria-label="左へスクロール"><Arrow d="M8 0v9L1 4.500z" /></button>
      <div className="ml-1 mr-[34px] h-[9px] flex-1 rounded-full bg-[#6e6e6e]" />
      <button type="button" aria-label="右へスクロール"><Arrow d="M1 0v9l7-4.500z" /></button>
    </div>
  </div>
);

const StatusBar = () => (
  <footer className="flex h-[22px] shrink-0 items-center whitespace-nowrap border-t border-[#c6c6c6] bg-[#f4f4f4] pr-5">
    <p className="flex-1 pl-1.5 text-[11px]">コピー先を選択し、Enter キーを押すか、貼り付けを選択します。</p>
    <div className="flex gap-[19px]">
      {STATS.map((stat) => (
        <span key={stat}>{stat}</span>
      ))}
    </div>
    <div className="ml-[19px] flex h-full">
      <button type="button" aria-label="標準" className="flex w-10 items-center justify-center bg-[#e0e0e0]">
        <Icon w={14} h={14} stroke="#222"><path d="M.6.6h12.800v12.800H.6zM5 .6v12.800M9.300.6v12.800M.6 5h12.800M.6 9.300h12.800" /></Icon>
      </button>
      <button type="button" aria-label="ページ レイアウト" className="flex w-10 items-center justify-center">
        <Icon w={14} h={14} stroke="#222"><path d="M.6.6h12.800v12.800H.6zM3.500 2.600h7v8.800h-7zM5 5h4M5 7h4M5 9h4" /></Icon>
      </button>
      <button type="button" aria-label="改ページ プレビュー" className="flex w-10 items-center justify-center">
        <Icon w={14} h={14} stroke="#222"><path d="M.6.6h12.800v12.800H.6zM5 .6V8M9.300.6V8M.6 8h8.700" /></Icon>
      </button>
    </div>
    <button type="button" aria-label="縮小" className="ml-1.5">
      <Icon w={8} h={8}><path d="M0 4h8" /></Icon>
    </button>
    <input
      type="range"
      aria-label="ズーム"
      min={0}
      max={100}
      defaultValue={50}
      className="mx-[5px] h-4 w-[100px] appearance-none bg-[linear-gradient(#777,#777)] bg-[length:100%_1px] bg-center bg-no-repeat [&::-webkit-slider-thumb]:h-[11px] [&::-webkit-slider-thumb]:w-[5px] [&::-webkit-slider-thumb]:appearance-none [&::-webkit-slider-thumb]:bg-[#6e6e6e]"
    />
    <button type="button" aria-label="拡大">
      <Icon w={8} h={8}><path d="M0 4h8M4 0v8" /></Icon>
    </button>
    <span className="ml-3.5">100%</span>
  </footer>
);

const App = () => (
  <div className="h-screen overflow-hidden bg-[#34443d] px-px pb-0.5">
    <div className="flex h-full flex-col border-x border-b border-[#107c41] bg-[#efefef] font-['Noto_Sans','Noto_Sans_CJK_JP',sans-serif] text-xs text-[#262626] [font-feature-settings:'palt']">
      <TitleBar />
      <TabRow />
      <Ribbon />
      <FormulaBar />
      <Sheet />
      <SheetTabs />
      <StatusBar />
    </div>
  </div>
);

export default App;
